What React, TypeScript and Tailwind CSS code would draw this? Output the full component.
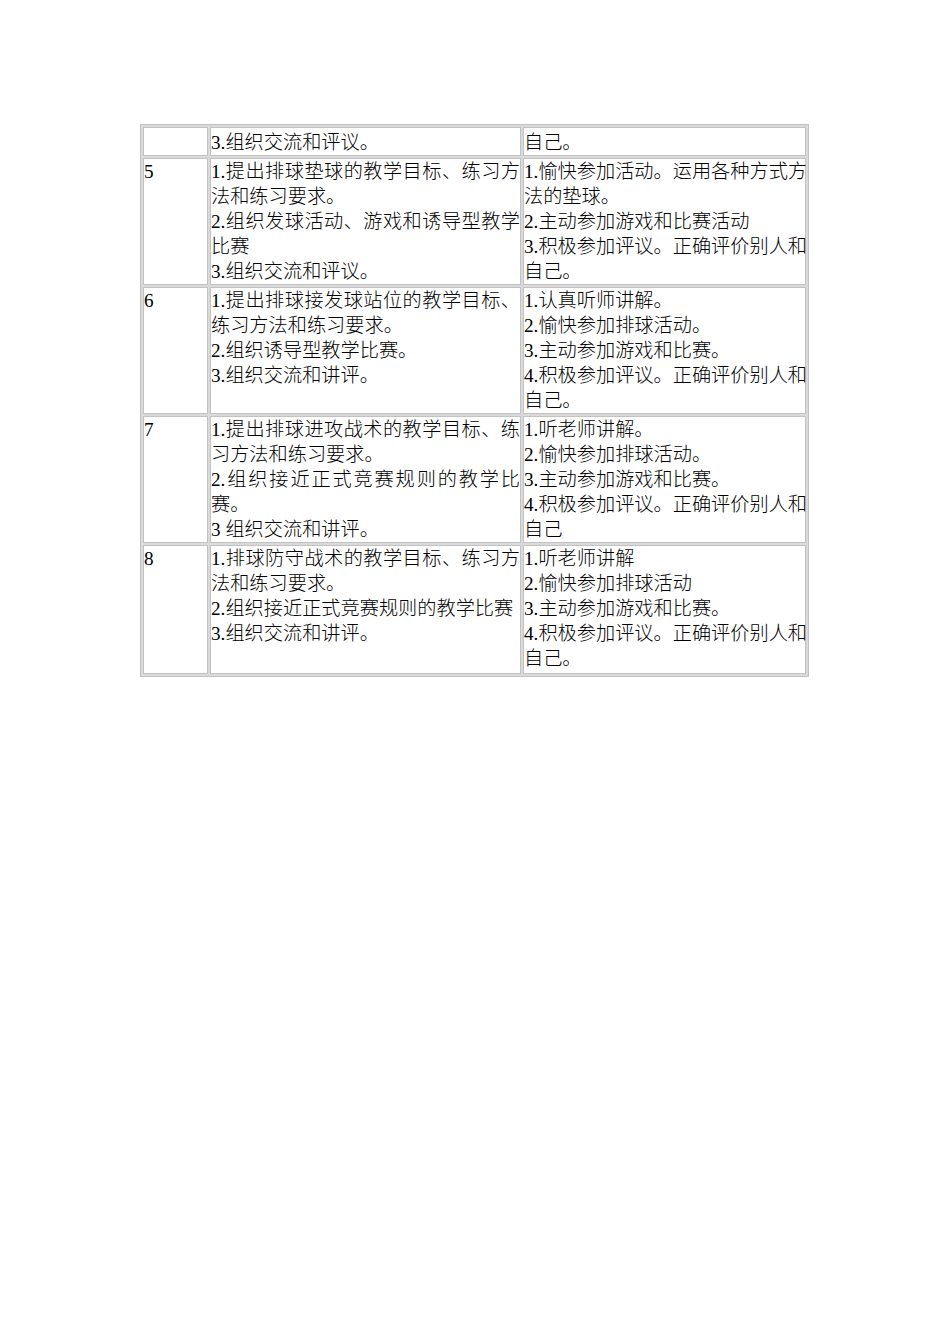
import React from 'react';

type Cell = string[][];

interface LessonRow {
  num: string;
  teacher: Cell;
  student: Cell;
}

// each cell is a list of paragraphs; every line but the last in a paragraph is a wrapped line
const rows: LessonRow[] = [
  {
    num: '',
    teacher: [['3.组织交流和评议。']],
    student: [['自己。']],
  },
  {
    num: '5',
    teacher: [
      ['1.提出排球垫球的教学目标、练习方', '法和练习要求。'],
      ['2.组织发球活动、游戏和诱导型教学', '比赛'],
      ['3.组织交流和评议。'],
    ],
    student: [
      ['1.愉快参加活动。运用各种方式方', '法的垫球。'],
      ['2.主动参加游戏和比赛活动'],
      ['3.积极参加评议。正确评价别人和', '自己。'],
    ],
  },
  {
    num: '6',
    teacher: [
      ['1.提出排球接发球站位的教学目标、', '练习方法和练习要求。'],
      ['2.组织诱导型教学比赛。'],
      ['3.组织交流和讲评。'],
    ],
    student: [
      ['1.认真听师讲解。'],
      ['2.愉快参加排球活动。'],
      ['3.主动参加游戏和比赛。'],
      ['4.积极参加评议。正确评价别人和', '自己。'],
    ],
  },
  {
    num: '7',
    teacher: [
      ['1.提出排球进攻战术的教学目标、练', '习方法和练习要求。'],
      ['2.组织接近正式竞赛规则的教学比', '赛。'],
      ['3 组织交流和讲评。'],
    ],
    student: [
      ['1.听老师讲解。'],
      ['2.愉快参加排球活动。'],
      ['3.主动参加游戏和比赛。'],
      ['4.积极参加评议。正确评价别人和', '自己'],
    ],
  },
  {
    num: '8',
    teacher: [
      ['1.排球防守战术的教学目标、练习方', '法和练习要求。'],
      ['2.组织接近正式竞赛规则的教学比赛'],
      ['3.组织交流和讲评。'],
    ],
    student: [
      ['1.听老师讲解'],
      ['2.愉快参加排球活动'],
      ['3.主动参加游戏和比赛。'],
      ['4.积极参加评议。正确评价别人和', '自己。'],
    ],
  },
];

const CellLines: React.FC<{ cell: Cell }> = ({ cell }) => (
  <>
    {cell.map((para, pi) =>
      para.map((line, li) => (
        <div
          key={`${pi}-${li}`}
          className={
            li < para.length - 1
              ? 'whitespace-nowrap text-justify [text-align-last:justify]'
              : 'whitespace-nowrap text-left'
          }
        >
          {line}
        </div>
      ))
    )}
  </>
);

export default function App() {
  return (
    <div className="min-h-[1344px] w-[950px] bg-white pt-[124px] pl-[140px]">
      <table
        className="w-[669px] table-fixed border-separate border-spacing-[2px] border border-[#c2c2c2] bg-[#dadada] text-[19.2px] leading-[25px] font-light text-black"
        style={{ fontFamily: '"Liberation Serif", "Noto Sans CJK SC", serif' }}
      >
        <tbody>
          {rows.map((row, i) => {
            // first row sits a little lower, last row carries a little extra at the bottom
            const pad = i === 0 ? 'pt-[2px]' : i === rows.length - 1 ? 'pb-[2px]' : '';
            const tdClass = `border border-[#c2c2c2] bg-white px-0 align-top ${pad}`;
            return (
              <tr key={i}>
                <td className={`${tdClass} w-[65px]`}>{row.num}</td>
                <td className={`${tdClass} w-[311px]`}>
                  <CellLines cell={row.teacher} />
                </td>
                <td className={`${tdClass} w-[283px]`}>
                  <CellLines cell={row.student} />
                </td>
              </tr>
            );
          })}
        </tbody>
      </table>
    </div>
  );
}
